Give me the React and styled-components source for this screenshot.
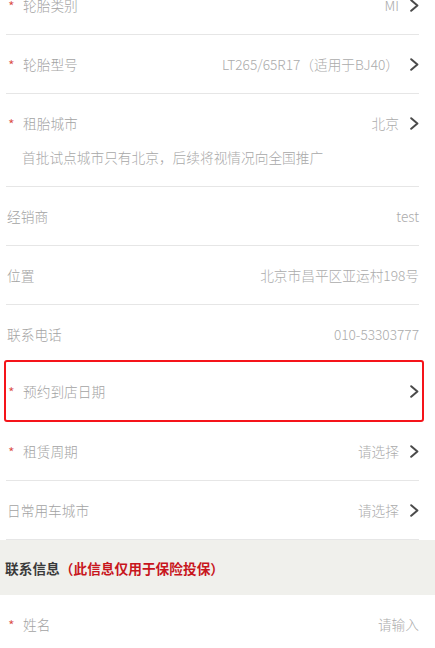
import React from "react";
import styled, { createGlobalStyle } from "styled-components";

const Global = createGlobalStyle`
  html, body { margin: 0; padding: 0; background: #fff; }
  body { font-family: "Noto Sans CJK SC", "Noto Sans", sans-serif; overflow: hidden; }
`;

const Page = styled.div`
  margin-top: -24px;
  width: 435px;
`;

const Group = styled.div`
  padding: 0 16px 0 6px;
  background: #fff;
`;

const Row = styled.div`
  position: relative;
  background: #fff;
  border-bottom: 1px solid ${(p) => (p.$last ? "transparent" : "#e6e6e6")};
  ${(p) =>
    p.$error &&
    `
    border: 2px solid #f5141a;
    border-radius: 3px;
    margin: -4px -5px 0 -2px;
    padding-right: 3px;
  `}
`;

const Main = styled.div`
  height: 58px;
  display: flex;
  align-items: center;
  font-size: 13.7px;
  font-weight: 300;
`;

const Label = styled.div`
  flex: 1;
  display: flex;
  align-items: center;
  color: #a3a3a3;
  padding-left: 1px;
  white-space: nowrap;
`;

const Star = styled.span`
  display: inline-block;
  width: 15px;
  padding-left: 1px;
  color: #d9463e;
  font-size: 15px;
  line-height: 1;
  transform: translateY(1px);
`;

const Value = styled.div`
  color: #ababab;
  white-space: nowrap;
  margin-right: ${(p) => (p.$arrow ? "11px" : "0")};
`;

const Hint = styled.div`
  margin-top: -5px;
  padding: 0 0 19px 16px;
  line-height: 20px;
  font-size: 13.7px;
  font-weight: 300;
  color: #a8a8a8;
`;

const ArrowSvg = styled.svg`
  width: 9px;
  height: 13px;
  flex: none;
`;

const Arrow = () => (
  <ArrowSvg viewBox="0 0 9 13">
    <polyline points="1.2,1.2 7.4,6.5 1.2,11.8" fill="none" stroke="#4a4a4a" strokeWidth="2" strokeLinecap="round" strokeLinejoin="round" />
  </ArrowSvg>
);

const SectionTitle = styled.div`
  height: 55px;
  background: #f0f0ec;
  display: flex;
  align-items: center;
  padding-left: 5px;
  font-size: 13.7px;
  font-weight: 700;
  color: #3a3a3a;
`;

const Red = styled.span`
  color: #c8161d;
`;

const Field = ({ label, value, required, arrow, error, last, children }) => (
  <Row $error={error} $last={last}>
    <Main>
      <Label>
        {required && <Star>*</Star>}
        {label}
      </Label>
      {value != null && <Value $arrow={arrow}>{value}</Value>}
      {arrow && <Arrow />}
    </Main>
    {children}
  </Row>
);

export default function App() {
  return (
    <Page>
      <Global />
      <Group>
        <Field required label="轮胎类别" value="MI" arrow />
        <Field required label="轮胎型号" value="LT265/65R17（适用于BJ40）" arrow />
        <Field required label="租胎城市" value="北京" arrow>
          <Hint>首批试点城市只有北京，后续将视情况向全国推广</Hint>
        </Field>
        <Field label="经销商" value="test" />
        <Field label="位置" value="北京市昌平区亚运村198号" />
        <Field label="联系电话" value="010-53303777" />
        <Field required label="预约到店日期" arrow error last />
        <Field required label="租赁周期" value="请选择" arrow />
        <Field label="日常用车城市" value="请选择" arrow />
      </Group>
      <SectionTitle>
        联系信息<Red>（此信息仅用于保险投保）</Red>
      </SectionTitle>
      <Group>
        <Field required label="姓名" value="请输入" />
      </Group>
    </Page>
  );
}
